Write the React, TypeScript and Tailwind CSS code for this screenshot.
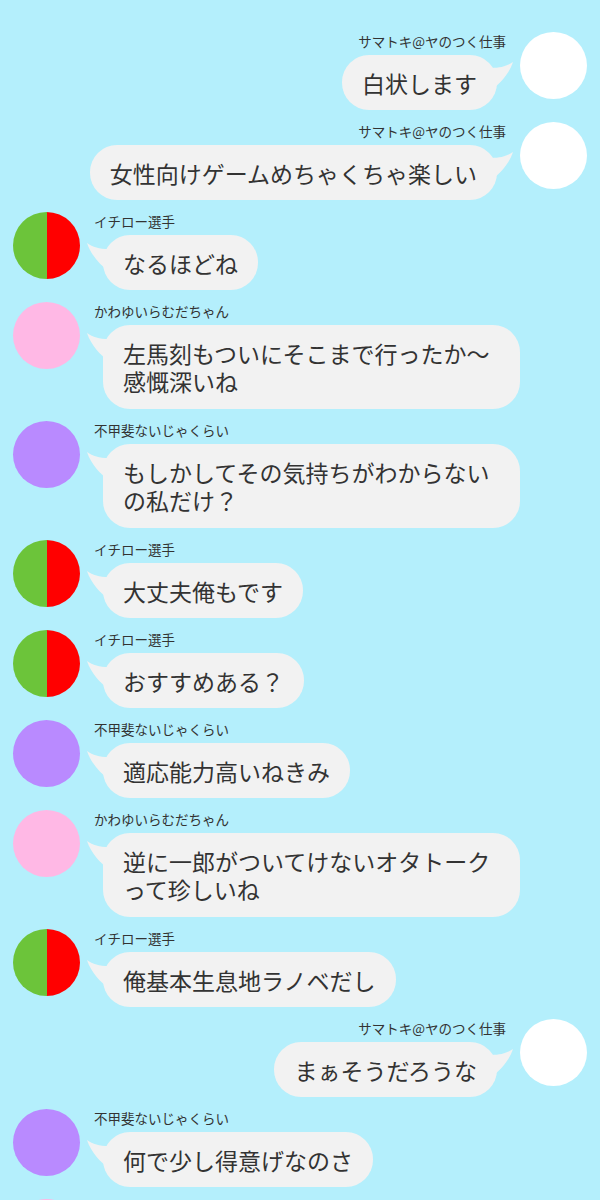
import React from "react";

type Who = "sama" | "ichiro" | "ramuda" | "jakurai";

const names: Record<Who, string> = {
  sama: "サマトキ@ヤのつく仕事",
  ichiro: "イチロー選手",
  ramuda: "かわゆいらむだちゃん",
  jakurai: "不甲斐ないじゃくらい",
};

function Avatar({ who }: { who: Who }) {
  if (who === "ichiro") {
    return (
      <div className="flex h-[67px] w-[67px] shrink-0 overflow-hidden rounded-full">
        <div className="h-full w-1/2 bg-[#6cc43a]" />
        <div className="h-full w-1/2 bg-[#ff0000]" />
      </div>
    );
  }
  const color =
    who === "sama" ? "bg-white" : who === "ramuda" ? "bg-[#ffb8e5]" : "bg-[#b98aff]";
  return <div className={`h-[67px] w-[67px] shrink-0 rounded-full ${color}`} />;
}

function TailLeft() {
  return (
    <svg
      className="absolute left-[-16px] top-[8px]"
      width="22"
      height="30"
      viewBox="0 0 22 30"
    >
      <path d="M0 0 C6 4 12 6 22 6 L22 28 C13 22 4 12 0 0 Z" fill="#f2f2f2" />
    </svg>
  );
}

function TailRight() {
  return (
    <svg
      className="absolute right-[-16px] top-[7px]"
      width="22"
      height="30"
      viewBox="0 0 22 30"
    >
      <path d="M22 0 C16 4 10 6 0 6 L0 28 C9 22 18 12 22 0 Z" fill="#f2f2f2" />
    </svg>
  );
}

function Msg({ who, lines }: { who: Who; lines: string[] }) {
  const right = who === "sama";
  const multi = lines.length > 1;
  const text = lines.map((l, i) => (
    <React.Fragment key={i}>
      {i > 0 && <br />}
      {l}
    </React.Fragment>
  ));
  const bubble = multi
    ? "w-[417px] pb-[14px]"
    : "pb-[13px]";
  if (right) {
    return (
      <div className="flex items-start justify-end">
        <div className="mr-[14px] flex flex-col items-end">
          <div className="mb-[5px] h-[18px] text-[13.5px] leading-[18px] text-[#333]">
            {names[who]}
          </div>
          <div
            className={`relative mr-[9px] whitespace-nowrap rounded-[27px] bg-[#f2f2f2] px-5 pt-[14px] text-[23px] leading-[28px] text-[#333] ${bubble}`}
          >
            <TailRight />
            <span className="relative">{text}</span>
          </div>
        </div>
        <Avatar who={who} />
      </div>
    );
  }
  return (
    <div className="flex items-start">
      <Avatar who={who} />
      <div className="ml-[14px] flex flex-col items-start">
        <div className="mb-[5px] h-[18px] text-[13.5px] leading-[18px] text-[#333]">
          {names[who]}
        </div>
        <div
          className={`relative ml-[9px] whitespace-nowrap rounded-[27px] bg-[#f2f2f2] px-5 pt-[14px] text-[23px] leading-[28px] text-[#333] ${bubble}`}
        >
          <TailLeft />
          <span className="relative">{text}</span>
        </div>
      </div>
    </div>
  );
}

const messages: { who: Who; lines: string[] }[] = [
  { who: "sama", lines: ["白状します"] },
  { who: "sama", lines: ["女性向けゲームめちゃくちゃ楽しい"] },
  { who: "ichiro", lines: ["なるほどね"] },
  { who: "ramuda", lines: ["左馬刻もついにそこまで行ったか〜", "感慨深いね"] },
  { who: "jakurai", lines: ["もしかしてその気持ちがわからない", "の私だけ？"] },
  { who: "ichiro", lines: ["大丈夫俺もです"] },
  { who: "ichiro", lines: ["おすすめある？"] },
  { who: "jakurai", lines: ["適応能力高いねきみ"] },
  { who: "ramuda", lines: ["逆に一郎がついてけないオタトーク", "って珍しいね"] },
  { who: "ichiro", lines: ["俺基本生息地ラノベだし"] },
  { who: "sama", lines: ["まぁそうだろうな"] },
  { who: "jakurai", lines: ["何で少し得意げなのさ"] },
];

export default function App() {
  return (
    <div className="h-[1200px] w-full overflow-hidden bg-[#b4effc] font-['Noto_Sans_CJK_JP','Noto_Sans',sans-serif]">
      <div className="flex flex-col gap-[12px] px-[13px] pt-[32px]">
        {messages.map((m, i) => (
          <Msg key={i} who={m.who} lines={m.lines} />
        ))}
        <div className="flex items-start">
          <Avatar who="ramuda" />
        </div>
      </div>
    </div>
  );
}
